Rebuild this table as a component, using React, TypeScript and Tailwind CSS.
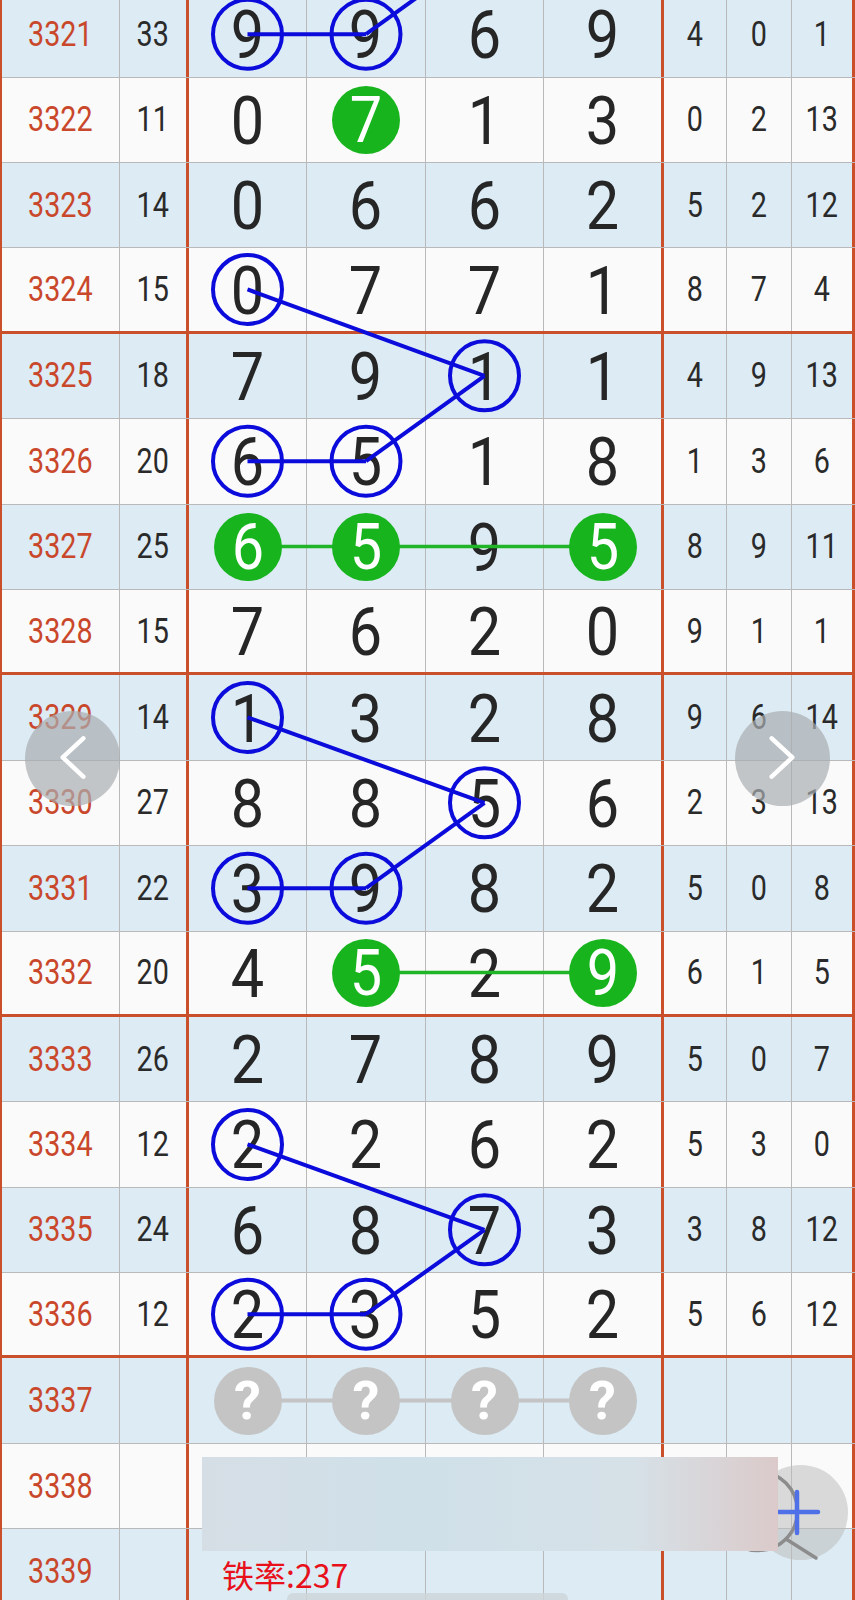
import React from 'react';

type Row = { n: number; s?: number; d?: (number | string)[]; r?: number[] };

const rows: Row[] = [
    { n: 3321, s: 33, d: [9, 9, 6, 9], r: [4, 0, 1] },
    { n: 3322, s: 11, d: [0, 7, 1, 3], r: [0, 2, 13] },
    { n: 3323, s: 14, d: [0, 6, 6, 2], r: [5, 2, 12] },
    { n: 3324, s: 15, d: [0, 7, 7, 1], r: [8, 7, 4] },
    { n: 3325, s: 18, d: [7, 9, 1, 1], r: [4, 9, 13] },
    { n: 3326, s: 20, d: [6, 5, 1, 8], r: [1, 3, 6] },
    { n: 3327, s: 25, d: [6, 5, 9, 5], r: [8, 9, 11] },
    { n: 3328, s: 15, d: [7, 6, 2, 0], r: [9, 1, 1] },
    { n: 3329, s: 14, d: [1, 3, 2, 8], r: [9, 6, 14] },
    { n: 3330, s: 27, d: [8, 8, 5, 6], r: [2, 3, 13] },
    { n: 3331, s: 22, d: [3, 9, 8, 2], r: [5, 0, 8] },
    { n: 3332, s: 20, d: [4, 5, 2, 9], r: [6, 1, 5] },
    { n: 3333, s: 26, d: [2, 7, 8, 9], r: [5, 0, 7] },
    { n: 3334, s: 12, d: [2, 2, 6, 2], r: [5, 3, 0] },
    { n: 3335, s: 24, d: [6, 8, 7, 3], r: [3, 8, 12] },
    { n: 3336, s: 12, d: [2, 3, 5, 2], r: [5, 6, 12] },
    { n: 3337, d: ['?', '?', '?', '?'] },
    { n: 3338 },
    { n: 3339 },
];

const ROW_H = 85.4;
const TOP = -7.8;
const COL_X = [247.5, 366, 484.5, 602.5];
const cy = (i: number) => i * ROW_H + (ROW_H - (i >= 0 && i % 4 === 3 && i < 16 ? 3 : 1)) / 2;

// green filled balls per row
const greens: Record<number, number[]> = { 1: [1], 6: [0, 1, 3], 11: [1, 3] };

const rings: [number, number][] = [
    [0, 0], [0, 1], [3, 0], [4, 2], [5, 0], [5, 1],
    [8, 0], [9, 2], [10, 0], [10, 1], [13, 0], [14, 2], [15, 0], [15, 1],
];

const blueLines: [number, number, number, number][] = [
    [-1, 2, 0, 1], [0, 1, 0, 0],
    [3, 0, 4, 2], [4, 2, 5, 1], [5, 1, 5, 0],
    [8, 0, 9, 2], [9, 2, 10, 1], [10, 1, 10, 0],
    [13, 0, 14, 2], [14, 2, 15, 1], [15, 1, 15, 0],
];

const ORANGE = 'border-[#c9502b]';
const GRAY = 'border-[#b9b9b9]';

const Small: React.FC<{ v?: number | string }> = ({ v }) => (
    <span className="inline-block scale-x-[0.82] text-[35px] leading-none">{v}</span>
);

const DigitCell: React.FC<{ v?: number | string; green: boolean; width: string; border: string }> = ({ v, green, width, border }) => {
    if (v === '?') {
        return (
            <div className={`${width} ${border} flex items-center justify-center`}>
                <span className="relative z-10 flex h-[68px] w-[68px] items-center justify-center rounded-full bg-[#c4c4c4] text-[54px] font-bold leading-none text-white">?</span>
            </div>
        );
    }
    return (
        <div className={`${width} ${border} flex items-center justify-center`}>
            {green ? (
                <span className="relative z-10 flex h-[68px] w-[68px] items-center justify-center rounded-full bg-[#17b41e] text-white">
                    <span className="inline-block scale-x-[0.9] text-[64px] leading-none pt-[3px]">{v}</span>
                </span>
            ) : (
                <span className="inline-block scale-x-[0.9] text-[66px] leading-none text-[#262626] pt-[4px]">{v}</span>
            )}
        </div>
    );
};

export default function App() {
    return (
        <div className="relative h-[1600px] w-[855px] overflow-hidden bg-white font-['Roboto',sans-serif]">
            <div className={`-mt-[7.8px] w-[855px] border-l-2 ${ORANGE}`}>
                {rows.map((row, i) => {
                    const g = greens[i] || [];
                    const rowBorder = i % 4 === 3 && i < 16 ? `border-b-[3px] ${ORANGE}` : `border-b ${GRAY}`;
                    return (
                        <div key={row.n} className={`flex h-[85.4px] ${i % 2 === 0 ? 'bg-[#dcebf4]' : 'bg-[#fafafa]'} ${rowBorder}`}>
                            <div className={`flex w-[118px] items-center justify-center border-r ${GRAY} text-[#c9472b]`}>
                                <Small v={row.n} />
                            </div>
                            <div className={`flex w-[69px] items-center justify-center border-r-[3px] ${ORANGE} text-[#2a2a2a]`}>
                                <Small v={row.s} />
                            </div>
                            <DigitCell v={row.d?.[0]} green={g.includes(0)} width="w-[118px]" border={`border-r ${GRAY}`} />
                            <DigitCell v={row.d?.[1]} green={g.includes(1)} width="w-[119px]" border={`border-r ${GRAY}`} />
                            <DigitCell v={row.d?.[2]} green={g.includes(2)} width="w-[118px]" border={`border-r ${GRAY}`} />
                            <DigitCell v={row.d?.[3]} green={g.includes(3)} width="w-[120px]" border={`border-r-[3px] ${ORANGE}`} />
                            <div className={`flex w-[63px] items-center justify-center border-r ${GRAY} text-[#2a2a2a]`}>
                                <Small v={row.r?.[0]} />
                            </div>
                            <div className={`flex w-[65px] items-center justify-center border-r ${GRAY} text-[#2a2a2a]`}>
                                <Small v={row.r?.[1]} />
                            </div>
                            <div className={`flex w-[63px] items-center justify-center border-r-[3px] ${ORANGE} text-[#2a2a2a]`}>
                                <Small v={row.r?.[2]} />
                            </div>
                        </div>
                    );
                })}
            </div>

            {/* trend lines and rings */}
            <svg className="pointer-events-none absolute left-0 z-[5] overflow-visible" style={{ top: TOP }} width="855" height="1700">
                <line x1={COL_X[0]} y1={cy(6)} x2={COL_X[3]} y2={cy(6)} stroke="#1fb527" strokeWidth="3.5" />
                <line x1={COL_X[1]} y1={cy(11)} x2={COL_X[3]} y2={cy(11)} stroke="#1fb527" strokeWidth="3.5" />
                <line x1={COL_X[0]} y1={cy(16)} x2={COL_X[3]} y2={cy(16)} stroke="#c4c4c4" strokeWidth="4" />
                {blueLines.map(([r1, c1, r2, c2], k) => (
                    <line key={k} x1={COL_X[c1]} y1={cy(r1)} x2={COL_X[c2]} y2={cy(r2)} stroke="#0b0bdc" strokeWidth="4" />
                ))}
                {rings.map(([r, c], k) => (
                    <circle key={k} cx={COL_X[c]} cy={cy(r)} r="34.5" fill="none" stroke="#0b0bdc" strokeWidth="4" />
                ))}
            </svg>

            {/* prev / next */}
            <div className="absolute left-[25px] top-[711px] z-20 h-[95px] w-[95px] rounded-full bg-[#a9aeb1]/70">
                <svg width="95" height="95">
                    <polyline points="58.3,27.3 37.7,46.3 58.3,65.7" fill="none" stroke="#fff" strokeWidth="4.5" strokeLinecap="round" strokeLinejoin="round" />
                </svg>
            </div>
            <div className="absolute left-[735px] top-[711px] z-20 h-[95px] w-[95px] rounded-full bg-[#a9aeb1]/70">
                <svg width="95" height="95">
                    <polyline points="36.7,27.3 57.3,46.3 36.7,65.7" fill="none" stroke="#fff" strokeWidth="4.5" strokeLinecap="round" strokeLinejoin="round" />
                </svg>
            </div>

            {/* zoom button */}
            <div className="absolute left-[753px] top-[1465px] z-20 h-[95px] w-[95px] rounded-full bg-[#bdbdbd]/55">
                <svg className="overflow-visible" width="95" height="95">
                    <circle cx="5" cy="46" r="39.5" fill="none" stroke="#8c8c8c" strokeWidth="3.5" />
                    <line x1="33" y1="74" x2="63" y2="93" stroke="#8c8c8c" strokeWidth="3.5" strokeLinecap="round" />
                    <line x1="25" y1="47" x2="65" y2="47" stroke="#4f70e6" strokeWidth="4.5" strokeLinecap="round" />
                    <line x1="44" y1="27" x2="44" y2="68" stroke="#4f70e6" strokeWidth="4.5" strokeLinecap="round" />
                </svg>
            </div>

            {/* banner */}
            <div className="absolute left-[202px] top-[1457px] z-30 h-[94px] w-[576px] bg-[linear-gradient(90deg,#d6dee5_0%,#cfe0e9_35%,#d6e1e7_75%,#dbcaca_100%)]" />

            <div className="absolute left-[222px] top-[1558px] z-30 font-['Noto_Sans_CJK_SC',sans-serif] text-[32px] leading-none text-[#e8101a]">
                铁率:237
            </div>

            <div className="absolute left-[287px] top-[1593px] z-30 h-[12px] w-[281px] rounded-full bg-[#cdd4d8]/80" />
        </div>
    );
}
